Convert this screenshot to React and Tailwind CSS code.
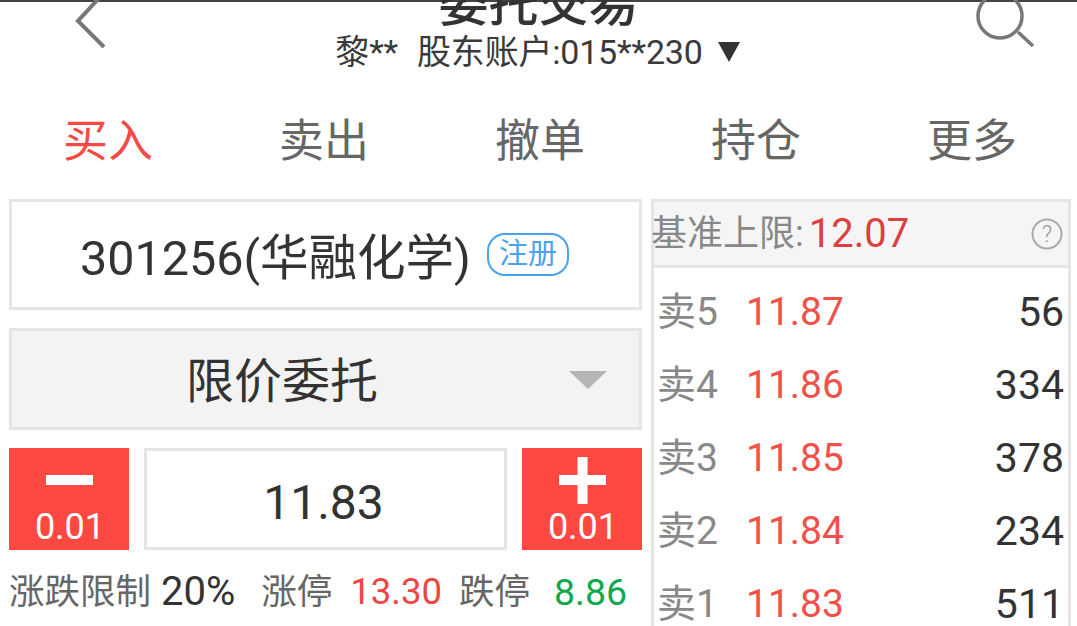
const FONT = "[font-family:Roboto,'Noto_Sans_CJK_SC',sans-serif]";

const tabs = ["买入", "卖出", "撤单", "持仓", "更多"];

const sells = [
  { label: "卖5", price: "11.87", vol: "56" },
  { label: "卖4", price: "11.86", vol: "334" },
  { label: "卖3", price: "11.85", vol: "378" },
  { label: "卖2", price: "11.84", vol: "234" },
  { label: "卖1", price: "11.83", vol: "511" },
];

function Stepper({ sign }) {
  return (
    <div className="flex h-[102px] w-[120px] shrink-0 flex-col items-center bg-[#ff4842] text-white">
      <svg width="47" height="47" viewBox="0 0 47 47" className="mt-[9px]">
        {sign === "plus" && <rect x="18.5" y="0" width="10" height="47" fill="#fff" />}
        <rect x="0" y="18" width="47" height="10" fill="#fff" />
      </svg>
      <span className="mt-[1px] pl-[2px] text-[36px] leading-[44px]">0.01</span>
    </div>
  );
}

export default function App() {
  return (
    <div className={`h-[626px] w-[1077px] overflow-hidden bg-white text-[#333] ${FONT}`}>
      {/* 顶部栏 */}
      <div className="relative h-[100px] border-t-2 border-[#444]">
        <div className="-mt-[27px] text-center text-[50px] leading-[58px] font-medium">委托交易</div>
        <div className="-mt-[3px] flex items-center justify-center pr-[2px] text-[34px] leading-[44px] tracking-[-0.2px] text-[#3a3a3a]">
          <span>黎**</span>
          <span className="ml-[19px]">股东账户:015**230</span>
          <span className="ml-[15px] h-0 w-0 border-x-[11px] border-t-[20px] border-x-transparent border-t-[#333]" />
        </div>
        <svg width="32" height="48" viewBox="0 0 32 48" className="absolute top-[-2px] left-[75px]" fill="none" stroke="#777" strokeWidth="4">
          <path d="M25 -3 L3 21 L29 47" />
        </svg>
        <svg width="62" height="50" viewBox="0 0 62 50" className="absolute top-[-2px] left-[974px]" fill="none" stroke="#777" strokeWidth="3.5">
          <circle cx="26" cy="16" r="22" />
          <path d="M44 32 L59 46" />
        </svg>
      </div>

      {/* 标签 */}
      <div className="grid h-[80px] w-[1080px] grid-cols-5 items-center pt-[3px] text-center text-[45px] leading-[76px] text-[#666]">
        {tabs.map((t, i) => (
          <div key={t} className={i === 0 ? "text-[#f44a45]" : ""}>{t}</div>
        ))}
      </div>

      <div className="mt-[19px] flex">
        {/* 左侧下单 */}
        <div className="ml-[9px] w-[633px] shrink-0">
          <div className="flex h-[111px] items-center justify-center border-[3px] border-[#e5e5e5] pr-[2px]">
            <span className="mt-[10px] text-[48.5px] leading-none">301256(华融化学)</span>
            <span className="ml-[16px] flex h-[43px] w-[82px] items-center justify-center rounded-[18px] border-2 border-[#4aa3ee] text-[29px] text-[#4aa3ee]">注册</span>
          </div>
          <div className="relative mt-[18px] flex h-[102px] items-center justify-center border-[3px] border-[#e5e5e5] bg-[#f3f3f3] pr-[87px] text-[48px]">
            <span className="mt-[6px]">限价委托</span>
            <span className="absolute top-[40px] right-[32px] h-0 w-0 border-x-[19px] border-t-[18px] border-x-transparent border-t-[#b5b5b5]" />
          </div>
          <div className="mt-[18px] flex justify-between">
            <Stepper sign="minus" />
            <div className="flex h-[102px] w-[363px] items-center justify-center border-[3px] border-[#e5e5e5] pt-[8px] pr-[4px] text-[48px]">11.83</div>
            <Stepper sign="plus" />
          </div>
          <div className="mt-[20px] flex items-center whitespace-nowrap text-[35.5px] leading-[44px] text-[#666]">
            <span>涨跌限制</span>
            <span className="ml-[10px] text-[40px] text-[#333]">20%</span>
            <span className="ml-[26px]">涨停</span>
            <span className="ml-[18px] text-[36.5px] text-[#ee4444]">13.30</span>
            <span className="ml-[17px]">跌停</span>
            <span className="ml-[24px] text-[37.5px] text-[#12a84e]">8.86</span>
          </div>
        </div>

        {/* 右侧盘口 */}
        <div className="ml-[9px] w-[420px] shrink-0 border-x-[3px] border-[#e5e5e5]">
          <div className="flex h-[69px] items-center border-y-[3px] border-[#e5e5e5] bg-[#f5f5f5]">
            <span className="-ml-[3px] text-[36px] text-[#888]">基准上限:</span>
            <span className="ml-[5px] text-[40px] text-[#dc3f3f]">12.07</span>
            <svg width="32" height="32" viewBox="0 0 32 32" className="mr-[5px] ml-auto" fill="none">
              <circle cx="16" cy="16" r="14.5" stroke="#aaa" strokeWidth="2" />
              <text x="16" y="24" textAnchor="middle" fontSize="23" fontWeight="300" fill="#999">?</text>
            </svg>
          </div>
          <div className="pt-[8px]">
            {sells.map((s) => (
              <div key={s.label} className="flex h-[73px] items-center pr-[4px] pl-[3px]">
                <span className="w-[89px] text-[39px] text-[#888]">{s.label}</span>
                <span className="text-[39px] text-[#f2504b]">{s.price}</span>
                <span className="ml-auto text-[41px] text-[#333]">{s.vol}</span>
              </div>
            ))}
          </div>
        </div>
      </div>
    </div>
  );
}
